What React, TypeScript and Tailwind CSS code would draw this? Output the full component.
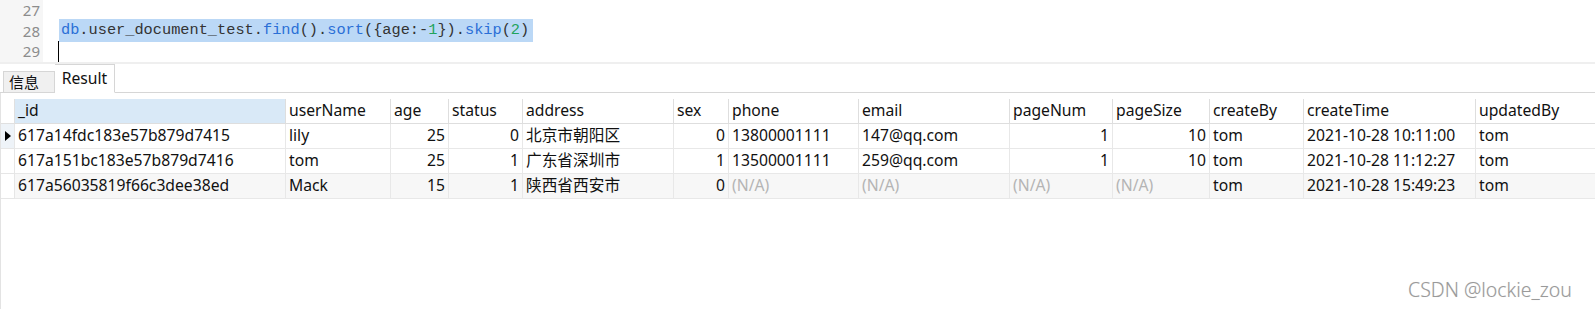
import React from "react";

type Row = {
  id: string;
  userName: string;
  age: number;
  status: number;
  address: string;
  sex: number;
  phone: string | null;
  email: string | null;
  pageNum: number | null;
  pageSize: number | null;
  createBy: string;
  createTime: string;
  updatedBy: string;
};

const rows: Row[] = [
  {
    id: "617a14fdc183e57b879d7415",
    userName: "lily",
    age: 25,
    status: 0,
    address: "北京市朝阳区",
    sex: 0,
    phone: "13800001111",
    email: "147@qq.com",
    pageNum: 1,
    pageSize: 10,
    createBy: "tom",
    createTime: "2021-10-28 10:11:00",
    updatedBy: "tom",
  },
  {
    id: "617a151bc183e57b879d7416",
    userName: "tom",
    age: 25,
    status: 1,
    address: "广东省深圳市",
    sex: 1,
    phone: "13500001111",
    email: "259@qq.com",
    pageNum: 1,
    pageSize: 10,
    createBy: "tom",
    createTime: "2021-10-28 11:12:27",
    updatedBy: "tom",
  },
  {
    id: "617a56035819f66c3dee38ed",
    userName: "Mack",
    age: 15,
    status: 1,
    address: "陕西省西安市",
    sex: 0,
    phone: null,
    email: null,
    pageNum: null,
    pageSize: null,
    createBy: "tom",
    createTime: "2021-10-28 15:49:23",
    updatedBy: "tom",
  },
];

const headers = [
  "_id",
  "userName",
  "age",
  "status",
  "address",
  "sex",
  "phone",
  "email",
  "pageNum",
  "pageSize",
  "createBy",
  "createTime",
  "updatedBy",
];

const gridCols =
  "grid grid-cols-[14px_271px_105px_58px_74px_151px_55px_130px_151px_103px_97px_94px_172px_120px]";

function Cell({ children, right }: { children?: React.ReactNode; right?: boolean }) {
  return (
    <div
      className={`flex h-[25px] items-center overflow-hidden whitespace-nowrap border-r border-b border-[#e8e8e8] px-[3px] ${
        right ? "justify-end" : ""
      }`}
    >
      {children}
    </div>
  );
}

function Na() {
  return <span className="text-[#b4b4b4]">(N/A)</span>;
}

function CodeLine() {
  return (
    <span className="bg-[#bbd8f6] pl-[2px] pr-[4px]">
      <span className="text-[#2a6fd6]">db</span>
      <span className="text-[#333]">.user_document_test.</span>
      <span className="text-[#2a6fd6]">find</span>
      <span className="text-[#333]">().</span>
      <span className="text-[#2a6fd6]">sort</span>
      <span className="text-[#333]">({"{"}age:-</span>
      <span className="text-[#22a35c]">1</span>
      <span className="text-[#333]">{"})."}</span>
      <span className="text-[#2a6fd6]">skip</span>
      <span className="text-[#333]">(</span>
      <span className="text-[#22a35c]">2</span>
      <span className="text-[#333]">)</span>
    </span>
  );
}

export default function App() {
  return (
    <div className="relative h-[309px] w-[1595px] overflow-hidden bg-white font-['Noto_Sans','Noto_Sans_CJK_SC',sans-serif] text-[15.7px] text-[#111]">
      {/* editor */}
      <div className="flex h-[62px]">
        <div className="flex w-[43px] flex-col items-end bg-[#f6f6f6] pr-[3px] text-[15px] text-[#8c8c8c]">
          <div className="flex h-[20.5px] items-center">27</div>
          <div className="flex h-[20.5px] items-center">28</div>
          <div className="flex h-[20.5px] items-center">29</div>
        </div>
        <div className="flex flex-col pl-[16px] font-['Liberation_Mono',monospace] text-[15.3px]">
          <div className="h-[20.5px]" />
          <div className="flex h-[20.5px] items-center">
            <CodeLine />
          </div>
          <div className="flex h-[20.5px] items-start">
            <div className="ml-[-1px] h-[21px] w-px bg-black" />
          </div>
        </div>
      </div>
      <div className="h-[2px] bg-[#efefef]" />

      {/* tabs */}
      <div className="flex h-[29px] items-end border-b border-[#d6d6d6] pl-[3px]">
        <div className="mb-[-1px] flex h-[22px] w-[52px] items-center border border-[#d6d6d6] bg-[#f0f0f0] pl-[5px] text-[15px]">
          信息
        </div>
        <div className="mb-[-1px] flex h-[29px] w-[60px] items-center justify-center border border-b-white border-l-0 border-[#d6d6d6] bg-white">
          Result
        </div>
      </div>

      {/* grid */}
      <div className="border-l border-[#e3e3e3] pt-[6px]">
        <div className={gridCols}>
          <div className="h-[25px] border-r border-b border-[#e0e0e0]" />
          {headers.map((h, i) => (
            <div
              key={h}
              className={`flex h-[25px] items-center whitespace-nowrap border-r border-b border-[#dedede] px-[3px] ${
                i === 0 ? "bg-[#d9e9f7]" : "bg-white"
              }`}
            >
              {h}
            </div>
          ))}
        </div>
        {rows.map((r, i) => (
          <div key={r.id} className={`${gridCols} ${i === 2 ? "bg-[#f7f7f7]" : "bg-white"}`}>
            <div
              className={`flex h-[25px] items-center border-r border-b border-[#e6e6e6] pl-[4px] ${
                i === 0 ? "bg-[#eef3f8]" : "bg-white"
              }`}
            >
              {i === 0 && (
                <svg width="6" height="10" viewBox="0 0 6 10">
                  <path d="M0 0 L6 5 L0 10 Z" fill="#000" />
                </svg>
              )}
            </div>
            <Cell>{r.id}</Cell>
            <Cell>{r.userName}</Cell>
            <Cell right>{r.age}</Cell>
            <Cell right>{r.status}</Cell>
            <Cell>{r.address}</Cell>
            <Cell right>{r.sex}</Cell>
            <Cell>{r.phone ?? <Na />}</Cell>
            <Cell>{r.email ?? <Na />}</Cell>
            <Cell right={r.pageNum !== null}>{r.pageNum ?? <Na />}</Cell>
            <Cell right={r.pageSize !== null}>{r.pageSize ?? <Na />}</Cell>
            <Cell>{r.createBy}</Cell>
            <Cell>{r.createTime}</Cell>
            <Cell>{r.updatedBy}</Cell>
          </div>
        ))}
        <div className="h-[120px]" />
      </div>

      {/* watermark */}
      <div className="absolute left-[1408px] top-[275px] text-[19.5px] font-light text-[#9a9a9a] [text-shadow:0_0_1px_#e0e0e0]">
        CSDN @lockie_zou
      </div>
    </div>
  );
}
